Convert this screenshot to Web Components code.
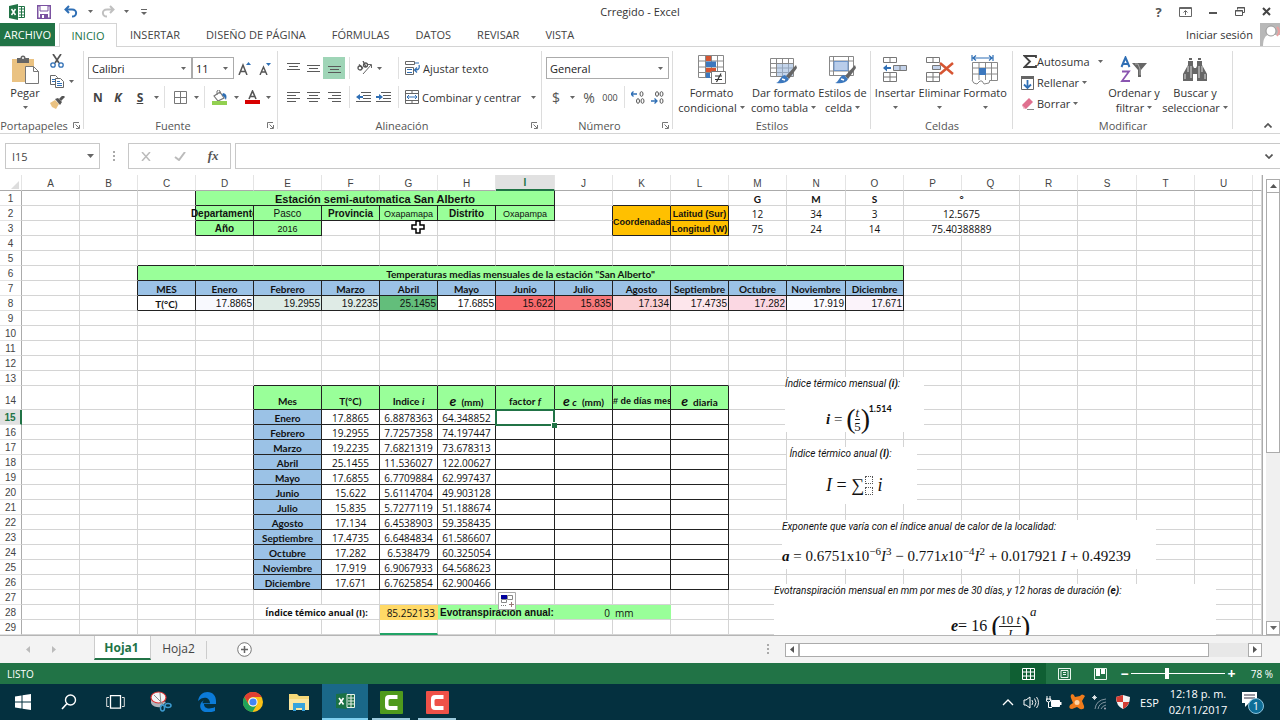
<!DOCTYPE html>
<html lang="es">
<head>
<meta charset="utf-8">
<title>Crregido - Excel</title>
<style>
html,body{margin:0;height:100%}
body{font-family:"Open Sans","Noto Sans",sans-serif;font-size:11px;color:#333;background:#fff}
</style>
</head>
<body>
<xl-app></xl-app>
<script>
const BASE = `
*{box-sizing:border-box}
button,input,select{font:inherit;color:inherit;margin:0;padding:0;border:0;background:none;border-radius:0;outline:0}
button{display:flex;align-items:center;justify-content:center;white-space:nowrap}
svg{display:block}
a{color:inherit;text-decoration:none}
`;
function define(name, css, html, after) {
  const template = document.createElement('template');
  template.innerHTML = '<style>' + BASE + css + '</style>' + html;
  customElements.define(name, class extends HTMLElement {
    constructor() {
      super();
      this.attachShadow({ mode: 'open' }).append(template.content.cloneNode(true));
    }
    connectedCallback() { if (after) after(this, this.shadowRoot); }
  });
}

/* name: [width, height, markup] */
const G = '#5a5a5a';
const lines = (list, c = G) => list.map(([x, y, w]) => `<path d="M${x} ${y}.5h${w}" stroke="${c}"/>`).join('');
const brush = '<path d="M27 10l-10 11 3 3 8-11z" fill="#666"/><path d="M16 20l4 4c-2 4-7 5-13 4 4-1 4-7 9-8z" fill="#3c78be"/><path d="M13 24l3 1" stroke="#fff" stroke-width="1.5"/>';
const ICONS = {
  down: [5, 3, '<path d="M0 0h5L2.500 3z" fill="#666"/>'],
  excel: [16, 16, '<path d="M0 2l9-2v16l-9-2z" fill="#217346"/><path d="M9.500 2.500h6v11h-6" fill="#fff" stroke="#217346"/><path d="M10 5h5M10 8h5M10 11h5M12.500 2v12" stroke="#217346"/><path d="M2.500 5l4 6M6.500 5l-4 6" stroke="#fff" stroke-width="1.500"/>'],
  save: [14, 14, '<path d="M.75.75h12.500v12.500H.75z" fill="#fff" stroke="#7b52a1" stroke-width="1.500"/><path d="M3 1v5h8V1" fill="#fff" stroke="#7b52a1"/><path d="M3 13V9h8v4" fill="#7b52a1"/><path d="M5 10h2v3H5z" fill="#fff"/>'],
  undo: [14, 13, '<path d="M5 1L1.500 4.500 5 8M2 4.500h6c6 0 5 7 0 7" fill="none" stroke="#2f6fb5" stroke-width="2"/>'],
  redo: [14, 13, '<path d="M9 1l3.500 3.500L9 8M12 4.500H6c-6 0-5 7 0 7" fill="none" stroke="#c0c0c0" stroke-width="2"/>'],
  customize: [6, 6, '<path d="M0 .5h6" stroke="#666"/><path d="M0 3h6L3 6z" fill="#666"/>'],
  ribbonopt: [13, 10, '<path d="M.5.5h12v9H.5z" fill="#fff" stroke="#666"/><path d="M.5 1.500h12" stroke="#666"/><path d="M6.500 8V4M4.500 5.500l2-2 2 2" fill="none" stroke="#666"/>'],
  min: [8, 10, '<path d="M0 6h8" stroke="#555" stroke-width="2"/>'],
  restore: [10, 9, '<path d="M2.500 2.500v-2h7v5h-2" fill="none" stroke="#555"/><path d="M2 1h8" stroke="#555"/><path d="M.5 3.500h7v5h-7z" fill="#fff" stroke="#555"/><path d="M0 4h8" stroke="#555"/>'],
  close: [9, 9, '<path d="M1 1l7 7M8 1L1 8" stroke="#444" stroke-width="2"/>'],
  avatar: [20, 24, '<path d="M0 0h20v24H0z" fill="#b8b8b8"/><path d="M3 24c0-8 2-11 5-12h12v12z" fill="#fff"/><circle cx="11" cy="8" r="5" fill="#fff" stroke="#999"/><path d="M17 4q4 4 0 9" fill="none" stroke="#e9a0a0" stroke-width="2"/>'],
  paste: [28, 30, '<path d="M1 4h22v23H1z" fill="#eac282"/><path d="M6 3h3.500a2.500 2.500 0 015 0H18v5H6z" fill="#666"/><circle cx="12" cy="3" r="1" fill="#fff"/><path d="M14.500 11.500h8l5 5v12h-13z" fill="#fff" stroke="#777"/><path d="M22.500 11.500v5h5" fill="none" stroke="#777"/>'],
  cut: [14, 14, '<path d="M3 0l6 9M11 0L5 9" stroke="#555" stroke-width="1.700"/><circle cx="3" cy="11" r="2.200" fill="none" stroke="#2f6fb5" stroke-width="1.300"/><circle cx="11" cy="11" r="2.200" fill="none" stroke="#2f6fb5" stroke-width="1.300"/>'],
  copy: [14, 13, '<path d="M.5.5h5l2 2v7h-7z" fill="#fff" stroke="#666"/><path d="M5.500 3.500h5l3 3v6h-8z" fill="#fff" stroke="#666"/><path d="M2 4.500h3M2 6.500h3M7 6.500h3M7 8.500h5M7 10.500h5" stroke="#2f6fb5"/>'],
  painter: [15, 13, '<path d="M0 7l5-3 4 4-3 5-4-2z" fill="#eac282"/><path d="M5 3l3-1 4 4-2 3z" fill="#555"/><path d="M10 4l4-4" stroke="#555" stroke-width="3"/>'],
  launch: [7, 7, '<path d="M.5 6V.5H6" fill="none" stroke="#777"/><path d="M2.500 2.500L6 6M6.500 3v3.500H3" fill="none" stroke="#777"/>'],
  growA: [13, 13, '<path d="M1 13L5 3l4 10M2.500 9.500h5" fill="none" stroke="#555" stroke-width="1.500"/><path d="M8 3l2.500-3L13 3z" fill="#2f6fb5"/>'],
  shrinkA: [12, 13, '<path d="M1 13l3.500-8L8 13M2.500 10h4" fill="none" stroke="#555" stroke-width="1.400"/><path d="M7 1h5L9.500 4z" fill="#2f6fb5"/>'],
  borders: [13, 13, '<path d="M.5.5h12v12H.5zM6.500 0v13M0 6.500h13" fill="none" stroke="#777"/>'],
  fill: [16, 15, '<path d="M2 6l6-4 4 6-6 3z" fill="#fff" stroke="#777" stroke-width="1.200"/><path d="M5 5V1q1.500-2 3 0v3" fill="none" stroke="#777"/><path d="M11 3q5 1 3 7-1-3-4-5z" fill="#2f6fb5"/><path d="M0 11h15v4H0z" fill="#92d050"/>'],
  fontcolor: [15, 14, '<path d="M4 9l3.500-8L11 9M5.500 6.500h4" fill="none" stroke="#555" stroke-width="1.600"/><path d="M0 10h15v4H0z" fill="#d80000"/>'],
  alT: [13, 12, lines([[0, 1, 13], [2, 4, 9], [0, 7, 13]])],
  alM: [13, 12, lines([[0, 3, 13], [2, 6, 9], [0, 9, 13]])],
  alB: [13, 12, lines([[0, 4, 13], [2, 7, 9], [0, 10, 13]])],
  alL: [13, 12, lines([[0, 1, 13], [0, 4, 9], [0, 7, 13], [0, 10, 9]])],
  alC: [13, 12, lines([[0, 1, 13], [2, 4, 9], [0, 7, 13], [2, 10, 9]])],
  alR: [13, 12, lines([[0, 1, 13], [4, 4, 9], [0, 7, 13], [4, 10, 9]])],
  orient: [16, 14, '<g fill="none" stroke="#555" stroke-width="1.300"><circle cx="3" cy="7" r="2"/><path d="M2 3.500l4 4"/><circle cx="8.500" cy="4" r="2"/><path d="M6 0l3 6"/></g><path d="M6 13l8-9M14.500 7V3.500H11" fill="none" stroke="#666"/>'],
  outdent: [15, 11, lines([[5, 0, 10], [7, 3, 8], [7, 6, 8], [0, 9, 15]]) + '<path d="M0 5l4-3v2h3v2H4v2z" fill="#2f6fb5"/>'],
  indent: [15, 11, lines([[5, 0, 10], [7, 3, 8], [7, 6, 8], [0, 9, 15]]) + '<path d="M7 5L3 2v2H0v2h3v2z" fill="#2f6fb5"/>'],
  wrap: [15, 14, '<path d="M.5.500h9v3h-9zM.5 6.500h8v7h-8z" fill="#fff" stroke="#666"/><path d="M10 2h4M2 8.500h5M2 11.500h5" stroke="#2f6fb5"/><path d="M14 4c1 4-1 5-4 5M12 6.500L9.500 9 12 11.500" fill="none" stroke="#2f6fb5" stroke-width="1.200"/>'],
  merge: [14, 14, '<path d="M.5.5h13v13H.5zM0 3.500h14M0 10.500h14M7 0v3.500M7 10.500V14" fill="none" stroke="#666"/><path d="M2 7h10M4 5L2 7l2 2M10 5l2 2-2 2" fill="none" stroke="#2f6fb5"/>'],
  incdec: [14, 13, '<path d="M0 3h6M2.500.5L0 3l2.500 2.500" fill="none" stroke="#2f6fb5" stroke-width="1.300"/><g fill="none" stroke="#555"><ellipse cx="10.500" cy="3" rx="1.500" ry="2.300"/><ellipse cx="7" cy="10" rx="1.500" ry="2.300"/><ellipse cx="11.500" cy="10" rx="1.500" ry="2.300"/></g>'],
  decdec: [14, 13, '<path d="M0 10h6M3.500 7.500L6 10l-2.500 2.500" fill="none" stroke="#2f6fb5" stroke-width="1.300"/><g fill="none" stroke="#555"><ellipse cx="6" cy="3" rx="1.500" ry="2.300"/><ellipse cx="10.500" cy="3" rx="1.500" ry="2.300"/><ellipse cx="10.500" cy="10" rx="1.500" ry="2.300"/></g>'],
  condfmt: [28, 29, '<path d="M.5.5h25v22H.5zM7.500 0v23M13.500 0v23M19.500 0v23M0 6h26M0 12h26M0 17.500h26" fill="#fff" stroke="#888"/><path d="M8 1h5v5H8zM8 13h10v4H8z" fill="#d65532"/><path d="M8 6.500h10v5.500H8zM8 18h4v5H8z" fill="#3c78be"/><path d="M13.500 16.500h14v12h-14z" fill="#fff" stroke="#777"/><path d="M17 21h7M17 24.500h7M23 18.500L18.500 27" stroke="#333" stroke-width="1.200"/>'],
  fmttable: [29, 29, '<path d="M1.500 3.500h23v18h-23zM7.500 3v19M13.500 3v19M19.500 3v19M1 8.500h24M1 13h24M1 17.500h24" fill="#fff" stroke="#888"/><path d="M8 9h16v12H8z" fill="#9db9de" opacity=".6"/>' + brush],
  cellstyle: [29, 29, '<path d="M1.500 1.500h24v19h-24zM5.500 1v20M20.500 1v20M1 6h25M1 16h25" fill="#fff" stroke="#888"/><path d="M6 6.500h14v9H6z" fill="#b9cdea" stroke="#6e95c9"/>' + brush],
  insert: [26, 26, '<path d="M1.500.5h13v5h-13zM8 .5v5M1.500 15.500h13v9h-13zM8 15v10M1 20h14" fill="#fff" stroke="#777"/><path d="M11.500 8.500h13v5h-13zM18 8.500v5" fill="#c3d2ea" stroke="#777"/><path d="M2 11h7" stroke="#2f6fb5" stroke-width="2"/><path d="M1 11l4-3.500v7z" fill="#2f6fb5"/>'],
  remove: [29, 26, '<path d="M1.500.5h13v5h-13zM8 .5v5M1.500 15.500h13v9h-13zM8 15v10M1 20h14" fill="#fff" stroke="#777"/><path d="M7.500 8.500h8v4h-8z" fill="#c3d2ea" stroke="#777"/><path d="M15 6l13 11M28 6L15 17" stroke="#d65532" stroke-width="2.500"/>'],
  format: [28, 30, '<path d="M1 0v6M22 0v6M2 3h19M5 .5L2 3l3 2.500M18 .5L21 3l-3 2.500" fill="none" stroke="#2f6fb5" stroke-width="1.200"/><path d="M1.500 7.500h25v18h-25zM8 7v18M14.500 7v18M20.500 7v18M1 13h26M1 19h26" fill="#fff" stroke="#888"/><path d="M8 13h7v7H8z" fill="#3c78be"/><path d="M1 25q1 4 5 4l3-3h2l2 3 5-1 1-3" fill="#fff" stroke="#888"/>'],
  sum: [14, 13, '<path d="M13 3V1H1.500L7 6.500 1.500 12H13v-2" fill="none" stroke="#444" stroke-width="1.800"/>'],
  filldown: [13, 14, '<path d="M.5.5h12v13H.5z" fill="#fff" stroke="#666"/><path d="M0 0h13v3H0z" fill="#666"/><path d="M6.500 4v8M3 8.500L6.500 12 10 8.500" fill="none" stroke="#2f6fb5" stroke-width="1.800"/>'],
  eraser: [13, 13, '<path d="M1 8L8 1l4 4-7 7H3z" fill="#e0708f"/><path d="M1 8l4 4H3z" fill="#f5c8d4"/><path d="M6 12.500h7" stroke="#888"/>'],
  sort: [28, 27, '<path d="M1.500 11L5.500 1.500 9.500 11M3 8h5" fill="none" stroke="#2f6fb5" stroke-width="2"/><path d="M2 15.500h7L2 25h8" fill="none" stroke="#8a55b0" stroke-width="1.800"/><path d="M12 7h15l-6 7v7h-3v-7z" fill="#666"/><path d="M15 8h3l2 5v6" fill="none" stroke="#aaa"/>'],
  find: [26, 24, '<path d="M6 3h5v5l1 2h2l1-2V3h5v4l5 9v7H15v-7h-4v7H1v-7l5-9z" fill="#666"/><path d="M7 1h3M16 1h3" stroke="#666" stroke-width="2"/><path d="M6 8v6M9 8v12M17 8v12M20 8v6M3 16v5M23 16v5" stroke="#ddd"/>'],
  up2: [8, 5, '<path d="M.5 4.500L4 1l3.500 3.500" fill="none" stroke="#555" stroke-width="1.700"/>'],
  down2: [8, 5, '<path d="M.5.500L4 4l3.500-3.500" fill="none" stroke="#555" stroke-width="1.700"/>'],
  cancel: [10, 9, '<path d="M1 0l8 9M9 0L1 9" stroke="#bbb" stroke-width="1.500"/>'],
  accept: [12, 9, '<path d="M1 5l4 3 6-8" fill="none" stroke="#bbb" stroke-width="2"/>'],
  dots: [2, 11, '<path d="M0 0h2v2H0zM0 4h2v2H0zM0 8h2v2H0z" fill="#aaa"/>'],
  namearrow: [7, 4, '<path d="M0 0h7L3.500 4z" fill="#666"/>'],
  left: [4, 7, '<path d="M4 0v7L0 3.500z" fill="#bbb"/>'], right: [4, 7, '<path d="M0 0v7l4-3.500z" fill="#bbb"/>'],
  leftd: [4, 7, '<path d="M4 0v7L0 3.500z" fill="#555"/>'], rightd: [4, 7, '<path d="M0 0v7l4-3.500z" fill="#555"/>'],
  upd: [7, 4, '<path d="M0 4h7L3.500 0z" fill="#555"/>'],
  plus: [15, 15, '<circle cx="7.500" cy="7.500" r="6.800" fill="#fff" stroke="#777"/><path d="M7.500 4v7M4 7.500h7" stroke="#666" stroke-width="1.500"/>'],
  vnormal: [13, 12, '<path d="M.5.5h12v11H.5zM4.500 0v12M8.500 0v12M0 4h13M0 8h13" fill="none" stroke="#fff"/>'],
  vpage: [13, 12, '<path d="M.5.5h12v11H.5zM3 2.500h7v7H3zM5 4.500h3M5 6.500h3" fill="none" stroke="#e8f5ec"/>'],
  vbreak: [13, 12, '<path d="M.5.5h12v11H.5z" fill="none" stroke="#e8f5ec"/><path d="M2 1h4v7H2zM7 1h4v5H7z" fill="#fff"/>'],
  win: [16, 16, '<path d="M0 2.500L6.500 1.500v6H0zM7.500 1.300L16 0v7.500H7.500zM0 8.500h6.500v6L0 13.500zM7.500 8.500H16V16l-8.500-1.300z" fill="#fff"/>'],
  search: [16, 16, '<circle cx="9.500" cy="6" r="5" fill="none" stroke="#fff" stroke-width="1.400"/><path d="M6 9.500L1 15" stroke="#fff" stroke-width="1.600"/>'],
  taskview: [19, 14, '<path d="M4.500.7h10v12.500h-10z" fill="none" stroke="#fff" stroke-width="1.300"/><path d="M3 2.500H.7v9H3M16 2.500h2.300v9H16" fill="none" stroke="#ddd"/>'],
  snip: [22, 22, '<path d="M1 6v6a8 5 0 0010 4l5-5z" fill="#aeb3bb"/><ellipse cx="8.500" cy="6.500" rx="7.500" ry="5.500" fill="#f4f4f6" stroke="#d33" stroke-width="1.200"/><path d="M4 4l9 9M10 2l1 11" stroke="#888"/><ellipse cx="12.500" cy="17" rx="2" ry="3" fill="none" stroke="#3d9bd0" stroke-width="1.500"/><ellipse cx="18" cy="14.500" rx="3" ry="2" fill="none" stroke="#3d9bd0" stroke-width="1.500"/>'],
  edge: [20, 20, '<path d="M1 9C2 3 6 0 10.500 0 16 0 19 4 19 9v3H7c0 5 6 5.500 11 3v4c-2 1-5 1.300-8 1.300-8-.3-9-9-3-12-1 1-1.500 2-1.500 3H13C13 4.500 5.500 4 1 9z" fill="#0b7bd8"/>'],
  chrome: [20, 20, '<circle cx="10" cy="10" r="10" fill="#fbc116"/><path d="M1.300 5A10 10 0 0118.700 5H10a5 5 0 00-4.300 7.500z" fill="#df3f32"/><path d="M1.300 5A10 10 0 009.500 20l4.300-7.500a5 5 0 01-8.100 0z" fill="#1fa35a"/><circle cx="10" cy="10" r="4.600" fill="#fff"/><circle cx="10" cy="10" r="3.600" fill="#4285f4"/>'],
  folder: [20, 18, '<path d="M0 1h8l2 2h10v14H0z" fill="#f5d978"/><path d="M0 6h20v11H0z" fill="#fbe6a0"/><path d="M4 10h12v8h-3v-3H7v3H4z" fill="#36a3dc"/>'],
  xltask: [19, 16, '<path d="M0 1l11-1v16L0 15z" fill="#1a7145"/><path d="M11 1.500h7.500v13H11z" fill="#217346" stroke="#e6f2ea"/><path d="M12 5h6M12 8h6M12 11h6M15 2v12" stroke="#e6f2ea"/><path d="M3 5l4.500 6.500M7.500 5L3 11.500" stroke="#fff" stroke-width="1.600"/>'],
  camG: [23, 23, '<rect width="23" height="23" rx="1" fill="#4f9a1c"/><path d="M17.500 4H9q-4 0-4 4v7q0 4 4 4h8.500v-4H10q-1.500 0-1.500-1.500v-4Q8.500 8 10 8h7.500z" fill="#fff"/>'],
  camR: [23, 23, '<rect width="23" height="23" rx="1" fill="#ee5148"/><path d="M17.500 4H9q-4 0-4 4v7q0 4 4 4h8.500v-4H10q-1.500 0-1.500-1.500v-4Q8.500 8 10 8h7.500z" fill="#fff"/>'],
  trayup: [12, 7, '<path d="M1 6l5-5 5 5" fill="none" stroke="#fff" stroke-width="1.300"/>'],
  speaker: [16, 13, '<path d="M1 4h2l4-3v11L3 9H1z" fill="none" stroke="#fff"/><path d="M9 4q1.500 2.500 0 5M11.500 2.500q3 4 0 8M13.500 1q4 5.500 0 11" fill="none" stroke="#eee"/>'],
  battery: [16, 13, '<path d="M5.500 4.500h8v6h-8z" fill="#fff" stroke="#fff"/><path d="M14 6h1.500v3H14z" fill="#fff"/><path d="M1 0v4M4 0v4M0 3h5q0 3-2.500 3T0 3M2.500 6v5.500H6" fill="#04303f" stroke="#fff"/>'],
  avast: [16, 16, '<path d="M3 0q2 0 3 3l5-1q2-3 5 0l-3 5 2 5q1 4-4 3l-3-2-5 2Q-1 15 1 11l3-2-2-5Q1 1 3 0z" fill="#f07c1c"/><circle cx="8" cy="8.500" r="2.500" fill="#ffd3a3"/>'],
  wifi: [15, 15, '<path d="M3 14q1-9 11-10M6 14q1-6 8-7M9 14q1-3 5-4" fill="none" stroke="#8295a0"/><path d="M2.500 0v5M0 2.500h5M1 1l3 3M4 1L1 4" stroke="#fff" stroke-width=".8"/><circle cx="13" cy="13.500" r="1" fill="#aab"/>'],
  shield: [14, 14, '<path d="M0 2l7-2 7 2q0 9-7 12Q0 11 0 2z" fill="#f3f3f3"/><path d="M0 2l7-2v7H.800zM7 7h6.200Q11.500 12 7 14z" fill="#d43d33"/>'],
  notif: [24, 24, '<path d="M1 2h15v11H8l-4 4v-4H1z" fill="#fff"/><path d="M3 5h11M3 8h11" stroke="#334" /><circle cx="15" cy="16" r="7.500" fill="#0d6d97" stroke="#8cc4dd"/><text x="15" y="20" text-anchor="middle" font-size="11" fill="#fff" font-family="Open Sans">1</text>'],
  corner: [8, 8, '<path d="M8 0v8H0z" fill="#ddd"/>'],
  autofill: [18, 18, '<path d="M.5.5h17v17H.5z" fill="#fff" stroke="#aaa"/><path d="M3 3h6v4H3z" fill="#00009c"/><path d="M9.500 3.500h5v4h-5zM3.500 7.500h5v3h-5z" fill="#fff" stroke="#888"/><path d="M3 13.500h6" stroke="#777" stroke-dasharray="1 1"/><path d="M13.500 10v5M11 12.500h5" stroke="#977"/>'],
  cross: [14, 14, '<path d="M5 1h4v4h4v4H9v4H5V9H1V5h4z" fill="#fff" stroke="#000" stroke-width="1.500"/>']
};
customElements.define('xl-icon', class extends HTMLElement {
  constructor() { super(); this.attachShadow({ mode: 'open' }); }
  connectedCallback() {
    const [w, h, body] = ICONS[this.getAttribute('name')];
    this.shadowRoot.innerHTML = `<style>:host{display:inline-block;flex:none}svg{display:block}</style><svg width="${w}" height="${h}" viewBox="0 0 ${w} ${h}" aria-hidden="true">${body}</svg>`;
  }
});
const icon = n => `<xl-icon name="${n}"></xl-icon>`;

define('xl-titlebar', `
:host{display:grid;grid-template-columns:1fr auto 1fr;align-items:center;height:23px;font-size:11px}
.q,.w{display:flex;align-items:center;height:23px}
.q{padding-left:3px}.w{justify-content:flex-end}
.q button,.w button{width:27px;height:22px}
.q .a{width:12px}.q .l{width:24px}.w button{font-weight:700;font-size:13px;color:#555}
h1{font-size:11px;font-weight:400;margin:0}
`, `<div class="q"><button aria-label="Excel">${icon('excel')}</button><button aria-label="Guardar">${icon('save')}</button>
<button aria-label="Deshacer">${icon('undo')}</button><button class="a" aria-label="Más deshacer">${icon('down')}</button>
<button class="l" aria-label="Rehacer">${icon('redo')}</button><button class="a" aria-label="Más rehacer">${icon('down')}</button><button class="l" aria-label="Personalizar">${icon('customize')}</button></div>
<h1>Crregido - Excel</h1>
<div class="w"><button aria-label="Ayuda">?</button><button aria-label="Opciones de cinta">${icon('ribbonopt')}</button><button aria-label="Minimizar">${icon('min')}</button><button aria-label="Restaurar">${icon('restore')}</button><button aria-label="Cerrar">${icon('close')}</button></div>`);

define('xl-tabs', `
:host{display:flex;height:24px;border-bottom:1px solid #d4d4d4;color:#444}
a{display:flex;align-items:center;padding:0 13px;height:23px;white-space:nowrap}
.file{background:#217346;color:#fff;padding:0;width:55px;justify-content:center;margin-right:4px}
.on{color:#217346;background:#fff;border:1px solid #d4d4d4;border-bottom:0;padding:0;width:58px;height:24px;justify-content:center}
.in{margin-left:auto;padding:0 7px;color:#333}
xl-icon{height:23px;overflow:hidden}
`, `<a class="file" href="#">ARCHIVO</a><a class="on" href="#">INICIO</a><a href="#">INSERTAR</a><a href="#">DISEÑO DE PÁGINA</a><a href="#">FÓRMULAS</a><a href="#">DATOS</a><a href="#">REVISAR</a><a href="#">VISTA</a><a class="in" href="#">Iniciar sesión</a>${icon('avatar')}`);

define('xl-group', `
:host{display:flex;flex-direction:column;flex:none;height:86px;position:relative}
:host::after{content:"";position:absolute;right:0;top:4px;bottom:4px;width:1px;background:#dcdcdc}
.body{height:71px;display:flex}
.foot{height:15px;display:flex;align-items:center;text-align:center;color:#555;line-height:15px}
.foot span{flex:1;white-space:nowrap}
.foot button{height:12px;width:16px}
`, `<div class="body"><slot></slot></div><div class="foot"><span></span></div>`, (el, root) => {
  root.querySelector('span').textContent = el.getAttribute('label');
  if (el.hasAttribute('launcher')) root.querySelector('.foot').insertAdjacentHTML('beforeend', `<button aria-label="Más opciones">${icon('launch')}</button>`);
});

define('xl-big', `
:host{display:block;flex:none}
button{flex-direction:column;justify-content:flex-start;width:100%;height:71px;padding-top:7px;color:#333}
.pic{height:31px;display:flex;align-items:center}
.t{line-height:15px;display:flex;align-items:center;justify-content:center;gap:3px;height:15px}
`, `<button><span class="pic"></span><span class="t one"></span><span class="t two"></span></button>`, (el, root) => {
  root.querySelector('.pic').innerHTML = icon(el.getAttribute('icon'));
  root.querySelector('.one').textContent = el.getAttribute('one');
  root.querySelector('.two').innerHTML = (el.getAttribute('two') || '') + icon('down');
});

define('xl-combo', `
:host{display:grid;grid-template-columns:1fr 15px;align-items:center;height:22px;border:1px solid #ababab;background:#fff;color:#222}
select{appearance:none;grid-area:1/1/2/3;width:100%;height:20px;padding-left:3px}
xl-icon{grid-area:1/2;justify-self:center;pointer-events:none}
`, `<select></select>${icon('down')}`, (el, root) => {
  const s = root.querySelector('select');
  s.setAttribute('aria-label', el.getAttribute('label'));
  s.innerHTML = `<option>${el.getAttribute('value')}</option>`;
});

define('xl-ribbon', `
:host{display:flex;height:87px;border-bottom:1px solid #d4d4d4}
.rows{display:flex;flex-direction:column;gap:7px;padding:10px 0 0 4px;width:100%}
.rows.al{padding-left:5px}
.r{display:flex;height:22px;align-items:center}
.r button{width:20px;height:22px;flex:none}
.r .a8{width:8px}.r .a12{width:12px}.r .w22{width:22px}.r .w24{width:24px}.r .w21{width:21px}.r .w41{width:41px;gap:4px;padding-right:8px}
.r .txt{width:auto;gap:3px;padding-left:3px}
.r .mg{width:137px;justify-content:flex-start}
.mg xl-icon:last-child{margin-left:auto;margin-right:3px}
.sel{background:#9fd5b7}
.sep{width:8px;height:22px;flex:none;padding-left:4px}
.sep::before{content:"";display:block;width:1px;height:22px;background:#e0e0e0}
.b{font-size:12px;font-weight:700;color:#444}
.cur{font-size:14px;color:#555}
.small{font-size:9px;color:#444}
.clip{display:grid;grid-template-columns:14px 14px;grid-auto-rows:21px;padding-top:3px}
.clip button{height:21px;width:14px}
.edit{display:flex;flex-direction:column;padding-top:4px;width:95px}
.edit button{height:21px;gap:3px;justify-content:flex-start;padding-left:7px}
.edit .ic{width:14px;display:flex;justify-content:center}
.edit .wide xl-icon:last-child{margin-left:5px}
.end{margin-left:auto;width:24px;display:flex;flex-direction:column;justify-content:flex-end;align-items:center;padding-bottom:5px}
`, `
<xl-group label="Portapapeles" launcher style="width:84px">
 <xl-big icon="paste" one="Pegar" style="width:50px"></xl-big>
 <div class="clip">
  <button aria-label="Cortar">${icon('cut')}</button><span></span>
  <button aria-label="Copiar">${icon('copy')}</button><button aria-label="Más copiar">${icon('down')}</button>
  <button aria-label="Copiar formato">${icon('painter')}</button></div>
</xl-group>
<xl-group label="Fuente" launcher style="width:194px"><div class="rows">
 <div class="r"><xl-combo label="Fuente" value="Calibri" style="width:104px"></xl-combo><xl-combo label="Tamaño" value="11" style="width:42px"></xl-combo><button class="w21" aria-label="Aumentar">${icon('growA')}</button><button aria-label="Disminuir">${icon('shrinkA')}</button></div>
 <div class="r"><button class="b">N</button><button class="b"><i>K</i></button><button class="b w24"><u>S</u></button><button class="a8" aria-label="Subrayado">${icon('down')}</button><span class="sep"></span>
 <button class="w24" aria-label="Bordes">${icon('borders')}</button><button class="a8" aria-label="Más bordes">${icon('down')}</button><span class="sep"></span>
 <button class="w24" aria-label="Relleno">${icon('fill')}</button><button class="a8" aria-label="Más relleno">${icon('down')}</button><button class="w24" aria-label="Color">${icon('fontcolor')}</button><button class="a8" aria-label="Más color">${icon('down')}</button></div>
</div></xl-group>
<xl-group label="Alineación" launcher style="width:264px"><div class="rows al">
 <div class="r"><button aria-label="Superior">${icon('alT')}</button><button aria-label="Medio">${icon('alM')}</button><button class="w22 sel" aria-label="Inferior">${icon('alB')}</button><span class="sep"></span><button class="w41" aria-label="Orientación">${icon('orient')}${icon('down')}</button><span class="sep"></span><button class="txt">${icon('wrap')}Ajustar texto</button></div>
 <div class="r"><button aria-label="Izquierda">${icon('alL')}</button><button aria-label="Centro">${icon('alC')}</button><button class="w22" aria-label="Derecha">${icon('alR')}</button><span class="sep"></span><button aria-label="Disminuir sangría">${icon('outdent')}</button><button class="w21" aria-label="Aumentar sangría">${icon('indent')}</button><span class="sep"></span><button class="txt mg">${icon('merge')}Combinar y centrar${icon('down')}</button></div>
</div></xl-group>
<xl-group label="Número" launcher style="width:131px"><div class="rows">
 <div class="r"><xl-combo label="Formato" value="General" style="width:123px"></xl-combo></div>
 <div class="r"><button class="cur">$</button><button class="a12" aria-label="Moneda">${icon('down')}</button><button class="w22 cur">%</button><button class="small">000</button><span class="sep"></span><button aria-label="Aumentar decimales">${icon('incdec')}</button><button aria-label="Disminuir decimales">${icon('decdec')}</button></div>
</div></xl-group>
<xl-group label="Estilos" style="width:198px">
 <xl-big icon="condfmt" one="Formato" two="condicional" style="width:77px"></xl-big><xl-big icon="fmttable" one="Dar formato" two="como tabla" style="width:67px"></xl-big><xl-big icon="cellstyle" one="Estilos de" two="celda" style="width:51px"></xl-big>
</xl-group>
<xl-group label="Celdas" style="width:142px">
 <xl-big icon="insert" one="Insertar" style="width:48px"></xl-big><xl-big icon="remove" one="Eliminar" style="width:41px"></xl-big><xl-big icon="format" one="Formato" style="width:50px"></xl-big>
</xl-group>
<xl-group label="Modificar" style="width:220px">
 <div class="edit"><button class="wide"><span class="ic">${icon('sum')}</span>Autosuma ${icon('down')}</button><button><span class="ic">${icon('filldown')}</span>Rellenar ${icon('down')}</button><button><span class="ic">${icon('eraser')}</span>Borrar ${icon('down')}</button></div>
 <xl-big icon="sort" one="Ordenar y" two="filtrar" style="width:52px"></xl-big><xl-big icon="find" one="Buscar y" two="seleccionar" style="width:70px"></xl-big>
</xl-group>
<div class="end"><button aria-label="Contraer la cinta">${icon('up2')}</button></div>`);

define('xl-formula', `
:host{display:flex;height:41px;padding:9px 0 6px 5px;align-items:stretch}
.n,.f,.x{border:1px solid #c8c8c8;background:#fff;height:26px;display:flex;align-items:center}
.n{width:95px}.n input{flex:1;min-width:0;padding-left:6px;color:#444}.n button{width:18px}
.d{width:28px;height:26px;display:flex;align-items:center;justify-content:center}
.x{width:103px}.x button{width:34px;height:24px;font:italic 700 13px "Liberation Serif",serif;color:#555}
.f{flex:1;margin-left:4px;border-right:0}.f input{flex:1;height:24px}.f button{width:22px}
`, `<div class="n"><input aria-label="Cuadro de nombres" value="I15"><button aria-label="Nombres">${icon('namearrow')}</button></div><div class="d">${icon('dots')}</div>
<div class="x"><button aria-label="Cancelar">${icon('cancel')}</button><button aria-label="Introducir">${icon('accept')}</button><button aria-label="Insertar función">fx</button></div>
<div class="f"><input aria-label="Barra de fórmulas"><button aria-label="Expandir">${icon('down2')}</button></div>`);

/* Worksheet contents, keyed by cell reference. */
const COLS = 'ABCDEFGHIJKLMNOPQRSTUV';
const WIDTHS = [58, 58, 58, 58, 68, 58, 58, 58, 59, 58, 58, 58, 58, 59, 58, 58, 58, 58, 59, 58, 58];
const MONTHS = ['Enero', 'Febrero', 'Marzo', 'Abril', 'Mayo', 'Junio', 'Julio', 'Agosto', 'Septiembre', 'Octubre', 'Noviembre', 'Diciembre'];
const TEMPS = ['17.8865', '19.2955', '19.2235', '25.1455', '17.6855', '15.622', '15.835', '17.134', '17.4735', '17.282', '17.919', '17.671'];
const SCALE = ['#f8f9fe', '#deebe5', '#dfebe6', '#63be7b', '#ffffff', '#f8696b', '#f8797b', '#fbd0d4', '#fde6ec', '#fbd8e3', '#fcfbff', '#fbf3fa'];
const INDEX = ['6.8878363', '7.7257358', '7.6821319', '11.536027', '6.7709884', '5.6114704', '5.7277119', '6.4538903', '6.6484834', '6.538479', '6.9067933', '6.7625854'];
const EVAP = ['64.348852', '74.197447', '73.678313', '122.00627', '62.997437', '49.903128', '51.188674', '59.358435', '61.586607', '60.325054', '64.568623', '62.900466'];
const CELLS = {
  D1: ['Estación semi-automatica San Alberto', 'g ar b big', 6],
  D2: ['Departamento', 'g ar b spill'], E2: ['Pasco', 'g ar'], F2: ['Provincia', 'g ar b'], G2: ['Oxapamapa', 'g ar s9'], H2: ['Distrito', 'g ar b'], I2: ['Oxapampa', 'g ar s9'],
  D3: ['Año', 'g ar b'], E3: ['2016', 'g ar s9'],
  K2: ['Coordenadas', 'o b s9 ar', 1, 2], L2: ['Latitud (Sur)', 'o b s9 ar'], L3: ["Longitud (W)", 'o b s9 ar'],
  M1: ['G', 'b'], N1: ['M', 'b'], O1: ['S', 'b'], P1: ['°', 'b', 2],
  M2: ['12'], N2: ['34'], O2: ['3'], P2: ['12.5675', '', 2], M3: ['75'], N3: ['24'], O3: ['14'], P3: ['75.40388889', '', 2],
  C6: ['Temperaturas medias mensuales de la estación "San Alberto"', 'g b', 13],
  C7: ['MES', 'bl b'], C8: ['T(°C)', 'b'],
  E14: ['Mes', 'g b'], F14: ['T(°C)', 'g b'], G14: ['Indice <i>i</i>', 'g b'], H14: ['<i class="e">e</i>&ensp;(mm)', 'g b'], I14: ['factor <i>f</i>', 'g b'],
  J14: ['<i class="e">e</i>&nbsp;<i>c</i>&ensp;(mm)', 'g b'], K14: ['# de días mes', 'g b s9 ar'], L14: ['<i class="e">e</i>&ensp;diaria', 'g b'],
  E28: ['Índice témico anual (I):', 'b s9 dj white', 2], G28: ['85.252133', 'am r'], H28: ['Evotranspiración anual:', 'g b l ng ar', 2], J28: ['0', 'g r ng'], K28: ['mm', 'g l ng'],
  G29: ['', 'gb']
};
MONTHS.forEach((m, i) => {
  CELLS[COLS[3 + i] + 7] = [m, 'bl b'];
  CELLS[COLS[3 + i] + 8] = [TEMPS[i], 'r ar', 1, 1, SCALE[i]];
  CELLS['E' + (15 + i)] = [m, 'bl b'];
  CELLS['F' + (15 + i)] = [TEMPS[i]];
  CELLS['G' + (15 + i)] = [INDEX[i]];
  CELLS['H' + (15 + i)] = [EVAP[i]];
});
const BLOCKS = [[3, 1, 8, 2], [3, 3, 4, 3], [10, 2, 11, 3], [2, 6, 14, 8], [4, 14, 11, 26]];
const inked = (c, r) => BLOCKS.some(b => c >= b[0] && c <= b[2] && r >= b[1] && r <= b[3]);

function sheetTable() {
  let out = '<table><colgroup><col style="width:22px">' + WIDTHS.map(w => `<col style="width:${w}px">`).join('') + '<col></colgroup><thead><tr><th>' + icon('corner') + '</th>';
  for (let c = 0; c < 22; c++) out += `<th scope="col"${c === 8 ? ' class="on"' : ''}><div>${c < 21 ? COLS[c] : ''}</div></th>`;
  out += '</tr></thead><tbody>';
  const covered = new Set();
  for (let r = 1; r <= 29; r++) {
    out += `<tr${r === 14 ? ' class="tall"' : ''}><th scope="row"${r === 15 ? ' class="on"' : ''}><div>${r}</div></th>`;
    for (let c = 0; c < 22; c++) {
      if (covered.has(c + ',' + r)) continue;
      const [text = '', cls = '', cs = 1, rs = 1, bg] = CELLS[COLS[c] + r] || [];
      for (let y = 0; y < rs; y++) for (let x = 0; x < cs; x++) covered.add((c + x) + ',' + (r + y));
      const ec = c + cs - 1, er = r + rs - 1;
      const names = [cls];
      if (inked(ec, r) || inked(ec + 1, r)) names.push('kr');
      if (inked(c, er) || inked(c, er + 1)) names.push('kb');
      const k = names.join(' ').trim();
      out += `<td${k ? ` class="${k}"` : ''}${cs > 1 ? ` colspan="${cs}"` : ''}${rs > 1 ? ` rowspan="${rs}"` : ''}${bg ? ` style="background:${bg}"` : ''}>${text ? `<div>${text}</div>` : ''}</td>`;
    }
    out += '</tr>';
  }
  return out + '</tbody></table>';
}

define('xl-note', `
:host{position:absolute;background:#fff;color:#111;font-family:Roboto,"Open Sans",sans-serif;font-size:10px;white-space:nowrap}
p{margin:0;line-height:14px;font-style:italic}
.eq{display:flex;align-items:center;font-family:"Liberation Serif",serif;font-size:15px}
::slotted(*){flex:none}
`, `<p><slot name="title"></slot></p><div class="eq"><slot></slot></div>`);

define('xl-fraction', `
:host{display:inline-flex;align-items:center}
.p{font-size:28px;line-height:28px;width:8px}
.f{display:flex;flex-direction:column;align-items:center;line-height:13px;font-size:13px}
.f span:first-child{border-bottom:1px solid #222;padding:0 1px}
`, `<span class="p">(</span><span class="f"><span><slot name="top"></slot></span><span><slot name="bottom"></slot></span></span><span class="p">)</span>`);

define('xl-sheet', `
:host{display:flex;flex:1;min-height:0;overflow:hidden;border-bottom:1px solid #b5b5b5}
.pane{flex:1;position:relative;overflow:hidden;border-right:1px solid #ababab}
table{table-layout:fixed;border-spacing:0;border-collapse:separate;width:100%;font-size:10px;color:#111}
th{font:400 10px/14px "Liberation Sans",sans-serif;color:#444;padding:0;height:15px;border-right:1px solid #d4d4d4;border-bottom:1px solid #d4d4d4}
th div{height:14px;line-height:16px}
thead th{height:16px;border-bottom-color:#ababab;border-right-color:#e4e4e4}
tbody th{border-right-color:#ababab;border-bottom-color:#e4e4e4}
thead th:first-child xl-icon{float:right;margin:4px 2px 0 0}
th.on{background:#e1e1e1;color:#217346;font-weight:700}
thead th.on{border-bottom:2px solid #217346}
tbody th.on{border-right:2px solid #217346}
td{padding:0;height:15px;border-right:1px solid #d4d4d4;border-bottom:1px solid #d4d4d4;text-align:center;line-height:16px;white-space:nowrap;overflow:hidden}
td div{height:14px;overflow:hidden}
.tall td,.tall th{height:24px;vertical-align:bottom}
.tall div{height:18px;line-height:20px}
.kr{border-right-color:#222}.kb{border-bottom-color:#222}
.g{background:#99ff99}.bl{background:#9bc2e6}.o{background:#ffc000}.am{background:#ffd966}
.b{font-weight:700;font-family:Lato,"Open Sans",sans-serif}
.ar{font-family:"Liberation Sans",sans-serif}
.big{font-size:11px}
.s9{font-size:9px}
.dj{font-family:"Open Sans",sans-serif}
.r{text-align:right}.l{text-align:left}
.l div{padding-left:2px}.r div{padding-right:1px}.r.am div,.r.ng div{padding-right:2px}
.ng{border-right-color:#99ff99}.am{border-color:#ffd966}
.gb{border-bottom:2px solid #21a366}
.e{font-size:14px}
.spill{overflow:visible}
.spill div{display:flex;justify-content:center;overflow:visible;clip-path:inset(0 0 0 -8px)}
.sel{position:absolute;left:495px;top:234px;width:60px;height:17px;border:2px solid #217346}
.sel::after{content:"";position:absolute;right:-4px;bottom:-4px;width:5px;height:5px;background:#217346;border:1px solid #fff;box-sizing:content-box;border-right:0;border-bottom:0}
.fly{position:absolute}
.bar{width:17px;display:flex;flex-direction:column;padding:4px 0 0 3px}
.bar button{border:1px solid #ababab;background:#fff;height:14px;width:14px;flex:none}
.thumb{border:1px solid #ababab;border-top:0;background:#fff;width:14px;height:260px}
.track{flex:1;background:#f0f0f0}
.i{display:flex;align-items:center;padding-top:14px}
.ph{display:grid;gap:3px;margin-left:1px}.ph b{width:8px;height:8px;border:1px dotted #555}
.big2{font-size:18px}
sup{font-size:11px;line-height:0}
.up{align-self:flex-start;font:700 9px Lato,sans-serif;padding-top:12px}
.upa{align-self:flex-start;font-size:13px;padding-top:6px;margin-left:1px}
`, `<div class="pane">${sheetTable()}<div class="sel"></div>
<xl-icon class="fly" name="autofill" style="left:498px;top:417px"></xl-icon>
<xl-icon class="fly" name="cross" style="left:411px;top:45px"></xl-icon>
<xl-note style="left:785px;top:202px;width:139px;height:55px"><span slot="title">Índice térmico mensual <b>(i)</b>:</span><span class="i" style="padding-left:41px"><b><i>i</i></b>&nbsp;=&nbsp;<xl-fraction><i slot="top">t</i><span slot="bottom">5</span></xl-fraction></span><span class="up">1.514</span></xl-note>
<xl-note style="left:787px;top:272px;width:130px;height:57px"><span slot="title">&nbsp;Índice térmico anual <b>(I)</b>:</span><span class="i big2" style="padding-left:39px"><i>I</i>&nbsp;=&nbsp;∑<span class="ph"><b></b><b></b></span>&nbsp;<i>i</i></span></xl-note>
<xl-note style="left:782px;top:345px;width:374px;height:49px"><span slot="title">Exponente que varía con el índice anual de calor de la localidad:</span><span style="padding-top:14px"><b><i>a</i></b> = 0.6751x10<sup>−6</sup><i>I</i><sup>3</sup> − 0.771<i>x</i>10<sup>−4</sup><i>I</i><sup>2</sup> + 0.017921 <i>I</i> + 0.49239</span></xl-note>
<xl-note style="left:774px;top:409px;width:442px;height:60px"><span slot="title">Evotranspiración mensual en mm por mes de 30 días, y 12 horas de duración <b>(e)</b>:</span><span class="i" style="padding-left:177px;font-size:16px"><b><i>e</i></b>=&nbsp;16&nbsp;<xl-fraction><span slot="top">10 <i>t</i></span><i slot="bottom">I</i></xl-fraction></span><i class="upa">a</i></xl-note>
</div>
<div class="bar"><button aria-label="Arriba">${icon('upd')}</button><div class="thumb"></div><div class="track"></div><button aria-label="Abajo">${icon('namearrow')}</button></div>`);

define('xl-sheettabs', `
:host{display:flex;align-items:center;height:27px;background:#f3f3f3;font-size:12px}
.nav{display:flex;padding-left:15px;width:94px}.nav button{width:26px;height:20px}
.tab{display:flex;align-items:center;justify-content:center;height:24px;width:57px;align-self:flex-start;color:#444;padding-right:2px}
.on{background:#fff;font-weight:700;color:#217346;border-bottom:2px solid #217346;border-left:1px solid #ccc;border-right:1px solid #ccc}
.add{width:76px;border-left:1px solid #ccc;height:18px;margin-left:-2px}
.h{margin-left:auto;display:flex;align-items:center;gap:16px;width:495px;margin-right:18px}
.bar{display:flex;flex:1;height:14px;background:#e8e8e8}
.bar button{width:14px;border:1px solid #ababab;background:#fff}.thumb{flex:0 1 410px;border:1px solid #ababab;background:#fff}
.bar button:last-child{margin-left:auto}
`, `<div class="nav"><button aria-label="Anterior">${icon('left')}</button><button aria-label="Siguiente">${icon('right')}</button></div><a class="tab on" href="#">Hoja1</a><a class="tab" href="#">Hoja2</a><button class="add" aria-label="Hoja nueva">${icon('plus')}</button>
<div class="h">${icon('dots')}<div class="bar"><button aria-label="Izquierda">${icon('leftd')}</button><div class="thumb"></div><button aria-label="Derecha">${icon('rightd')}</button></div></div>`);

define('xl-status', `
:host{display:flex;align-items:center;height:21px;background:#217346;color:#fff;padding:0 7px;font-size:10px}
.v{margin-left:auto;display:flex}.v button{width:36px;height:21px}.v .on{background:#0f5f33}
.z{width:13px;height:20px;font-size:14px;font-weight:700}
input{appearance:none;width:94px;height:12px;background:linear-gradient(#fff,#fff) center/100% 1px no-repeat}
input::-webkit-slider-thumb{appearance:none;width:4px;height:11px;background:#fff}
output{width:35px;text-align:right;white-space:nowrap}
`, `<span>LISTO</span><div class="v"><button class="on" aria-label="Normal">${icon('vnormal')}</button><button aria-label="Diseño de página">${icon('vpage')}</button><button aria-label="Saltos de página">${icon('vbreak')}</button></div>
<button class="z" aria-label="Alejar">−</button><input type="range" min="0" max="100" value="38" aria-label="Zoom"><button class="z" aria-label="Acercar">+</button><output>78 %</output>`);

define('win-taskbar', `
:host{display:flex;height:36px;background:#04303f;color:#fff;font-size:11px}
.apps{display:flex}.apps button{width:46px;height:36px}
.apps .on{background:#1a6888;border-bottom:2px solid #7fd0f0}
.apps .run{background:linear-gradient(#9cc9dc,#9cc9dc) center bottom/38px 2px no-repeat}
.tray{margin-left:auto;display:flex;align-items:center}
.tray button{width:23px;height:36px}
.lang{width:31px;text-align:center;font-size:11px}
time{width:66px;text-align:center;line-height:16px;display:block}
.tray .n{width:49px;padding-right:5px}
`, `<div class="apps">${[['win', 'Inicio'], ['search', 'Buscar'], ['taskview', 'Vista de tareas'], ['snip', 'Recortes'], ['edge', 'Edge'], ['chrome', 'Chrome'], ['folder', 'Explorador'], ['xltask', 'Excel', 'on'], ['camG', 'Camtasia', 'run'], ['camR', 'Grabadora', 'run']].map(([n, l, c = '']) => `<button class="${c}" aria-label="${l}">${icon(n)}</button>`).join('')}</div>
<div class="tray">${['trayup', 'speaker', 'battery', 'avast', 'wifi', 'shield'].map(n => `<button aria-label="${n}">${icon(n)}</button>`).join('')}<span class="lang">ESP</span><time>12:18 p. m.<br>02/11/2017</time><button class="n" aria-label="Notificaciones">${icon('notif')}</button></div>`);

define('xl-app', ':host{display:flex;flex-direction:column;height:100vh;overflow:hidden}',
  '<xl-titlebar></xl-titlebar><xl-tabs></xl-tabs><xl-ribbon></xl-ribbon><xl-formula></xl-formula><xl-sheet></xl-sheet><xl-sheettabs></xl-sheettabs><xl-status></xl-status><win-taskbar></win-taskbar>');
</script>
</body>
</html>
